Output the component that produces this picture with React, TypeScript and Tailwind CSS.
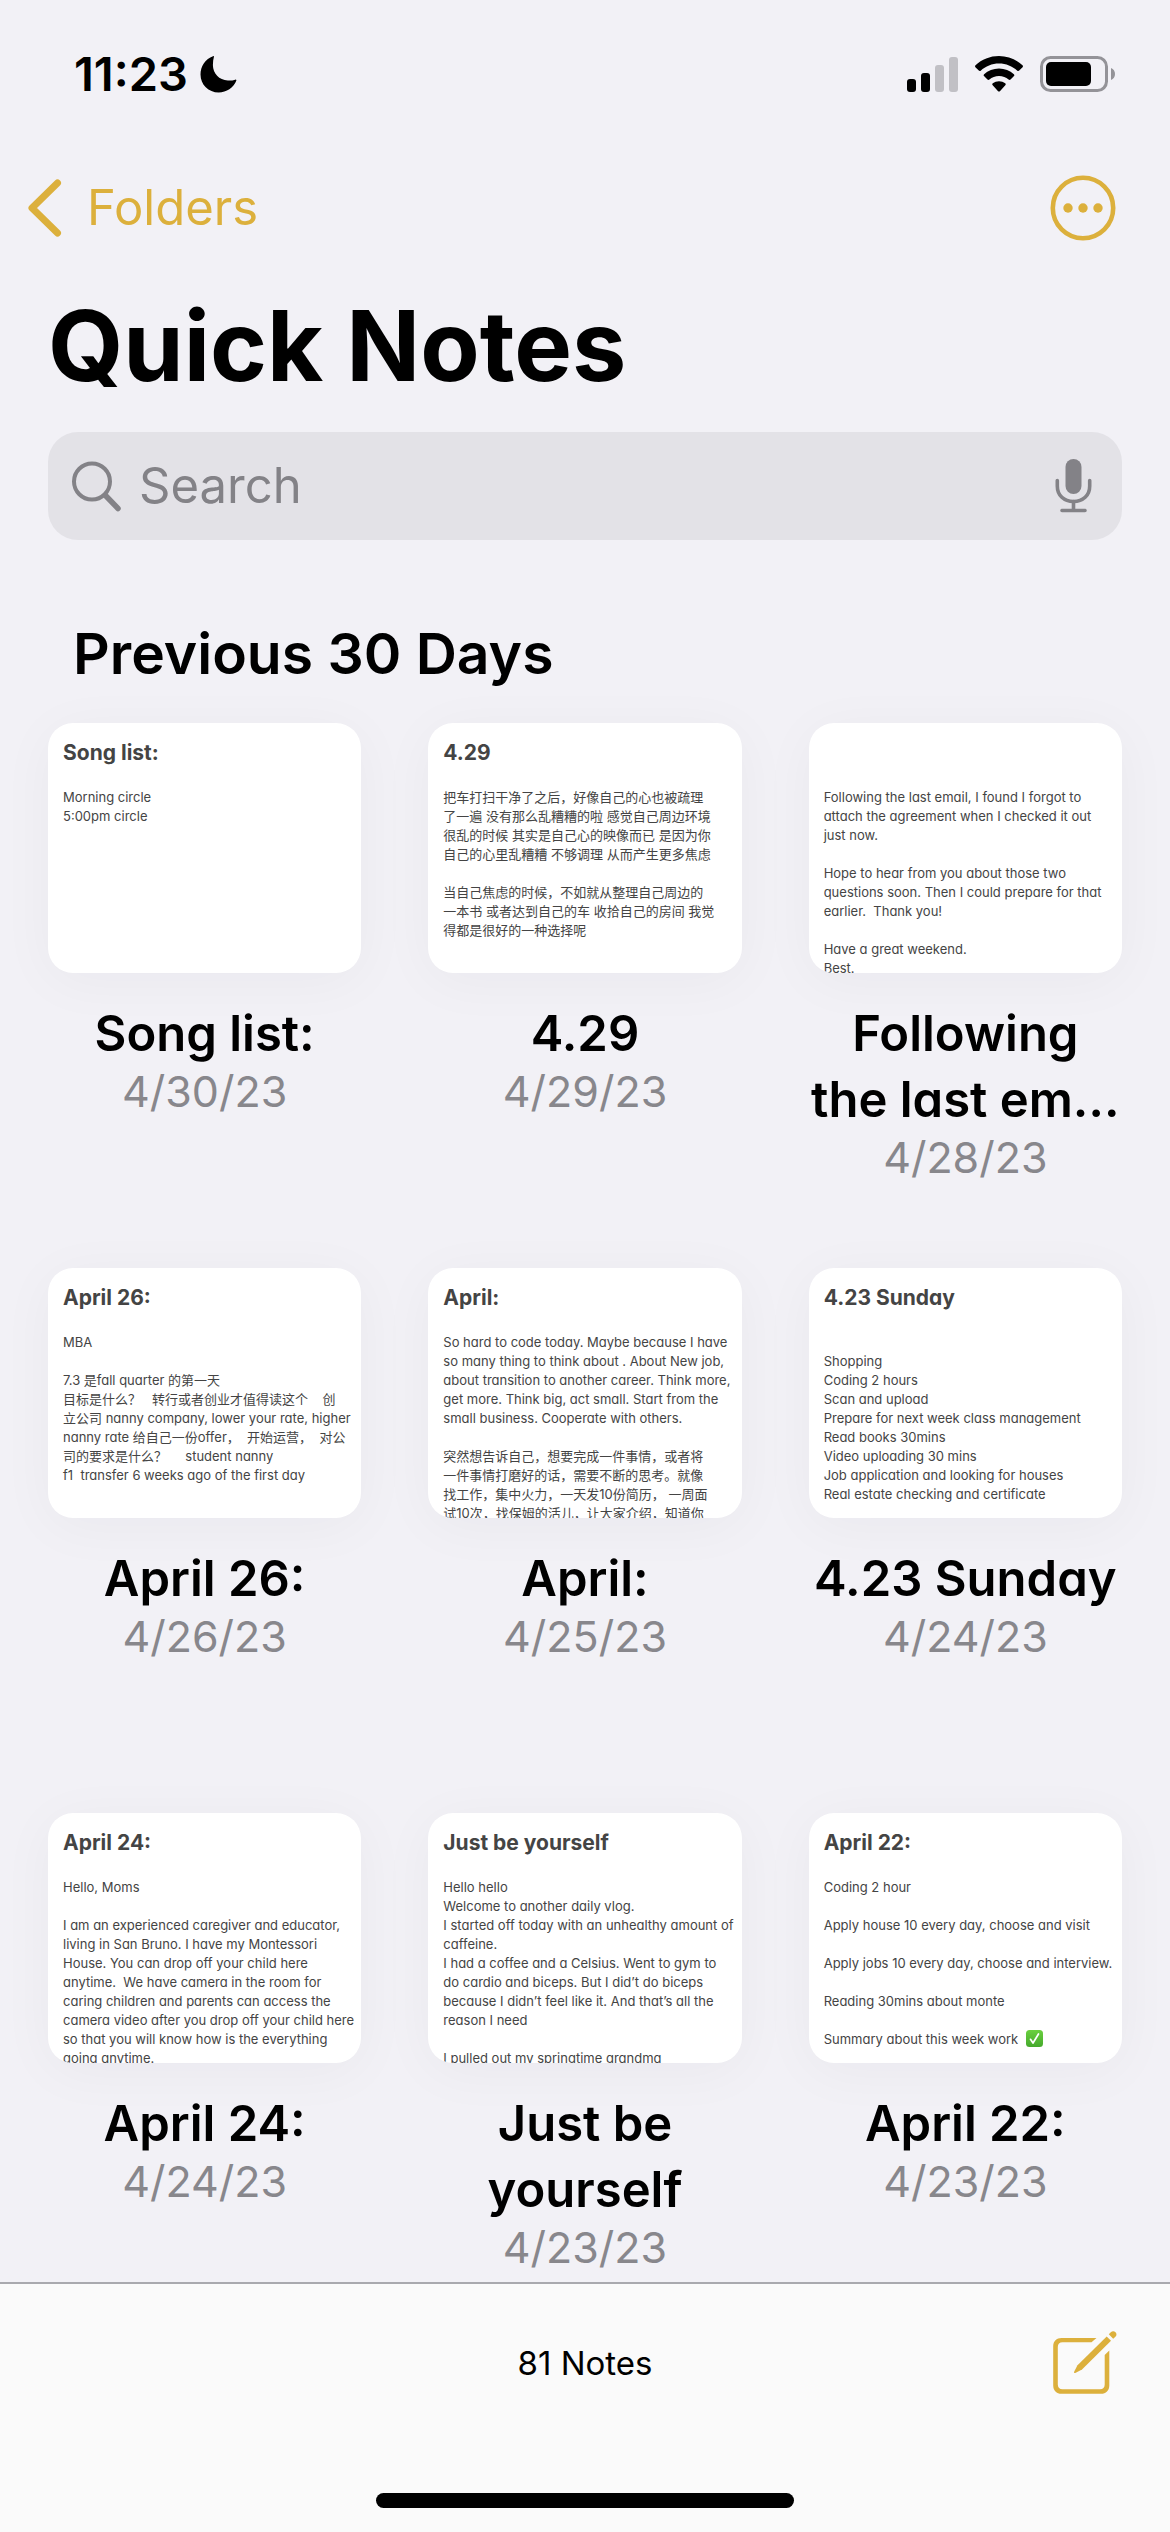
import React from "react";

type Note = {
  title: string;
  date: string;
  heading: string;
  body: string;
  done?: boolean;
};

const notes: Note[] = [
  {
    title: "Song list:",
    date: "4/30/23",
    heading: "Song list:",
    body: "Morning circle\n5:00pm circle",
  },
  {
    title: "4.29",
    date: "4/29/23",
    heading: "4.29",
    body: "把车打扫干净了之后，好像自己的心也被疏理\n了一遍 没有那么乱糟糟的啦 感觉自己周边环境\n很乱的时候 其实是自己心的映像而已 是因为你\n自己的心里乱糟糟 不够调理 从而产生更多焦虑\n\n当自己焦虑的时候，不如就从整理自己周边的\n一本书 或者达到自己的车 收拾自己的房间 我觉\n得都是很好的一种选择呢",
  },
  {
    title: "Following the last em…",
    date: "4/28/23",
    heading: "",
    body: "Following the last email, I found I forgot to\nattach the agreement when I checked it out\njust now.\n\nHope to hear from you about those two\nquestions soon. Then I could prepare for that\nearlier.  Thank you!\n\nHave a great weekend.\nBest.",
  },
  {
    title: "April 26:",
    date: "4/26/23",
    heading: "April 26:",
    body: "MBA\n\n7.3 是fall quarter 的第一天\n目标是什么？   转行或者创业才值得读这个    创\n立公司 nanny company, lower your rate, higher\nnanny rate 给自己一份offer，  开始运营，  对公\n司的要求是什么？     student nanny\nf1  transfer 6 weeks ago of the first day",
  },
  {
    title: "April:",
    date: "4/25/23",
    heading: "April:",
    body: "So hard to code today. Maybe because I have\nso many thing to think about . About New job,\nabout transition to another career. Think more,\nget more. Think big, act small. Start from the\nsmall business. Cooperate with others.\n\n突然想告诉自己，想要完成一件事情，或者将\n一件事情打磨好的话，需要不断的思考。就像\n找工作，集中火力，一天发10份简历， 一周面\n试10次，找保姆的活儿，让大家介绍，知道你",
  },
  {
    title: "4.23 Sunday",
    date: "4/24/23",
    heading: "4.23 Sunday",
    body: "\nShopping\nCoding 2 hours\nScan and upload\nPrepare for next week class management\nRead books 30mins\nVideo uploading 30 mins\nJob application and looking for houses\nReal estate checking and certificate",
  },
  {
    title: "April 24:",
    date: "4/24/23",
    heading: "April 24:",
    body: "Hello, Moms\n\nI am an experienced caregiver and educator,\nliving in San Bruno. I have my Montessori\nHouse. You can drop off your child here\nanytime.  We have camera in the room for\ncaring children and parents can access the\ncamera video after you drop off your child here\nso that you will know how is the everything\ngoing anytime.",
  },
  {
    title: "Just be yourself",
    date: "4/23/23",
    heading: "Just be yourself",
    body: "Hello hello\nWelcome to another daily vlog.\nI started off today with an unhealthy amount of\ncaffeine.\nI had a coffee and a Celsius. Went to gym to\ndo cardio and biceps. But I did’t do biceps\nbecause I didn’t feel like it. And that’s all the\nreason I need\n\nI pulled out my springtime grandma",
  },
  {
    title: "April 22:",
    date: "4/23/23",
    heading: "April 22:",
    body: "Coding 2 hour\n\nApply house 10 every day, choose and visit\n\nApply jobs 10 every day, choose and interview.\n\nReading 30mins about monte\n\nSummary about this week work  ",
    done: true,
  },
];

function StatusBar() {
  return (
    <div className="flex h-[148px] items-center justify-between pr-[54px] pl-[74px]">
      <div className="flex items-center gap-3">
        <span className="text-[47px] leading-[48px] font-semibold">11:23</span>
        <svg width="37" height="37" viewBox="0 0 37 37" aria-label="Do not disturb">
          <path d="M14 .6C14 .1 13.500 -.1 13 .2C5.500 3 .5 10.200 .5 18.500C.5 28.700 8.500 36.500 18.700 36.500C26.600 36.500 33.500 31.800 36.300 24.800C36.600 24 36 23.400 35.200 23.700C32.800 24.400 30.300 24.700 27.800 24.500C19.200 24 12.900 17.600 12.900 9C12.900 6 13.300 3.300 14 .6Z" />
        </svg>
      </div>
      <div className="flex items-center gap-[17px]">
        <svg width="51" height="36" viewBox="0 0 51 36" aria-label="Signal">
          <rect x="0" y="23" width="9" height="13" rx="3" />
          <rect x="14" y="17" width="9" height="19" rx="3" />
          <rect x="28" y="9" width="9" height="27" rx="3" fill="#c1c0c5" />
          <rect x="42" y="1" width="9" height="35" rx="3" fill="#c1c0c5" />
        </svg>
        <svg width="48" height="36" viewBox="0 0 48 36" aria-label="Wi-Fi">
          <path d="M24 0C33 0 41.200 3.400 47.500 9.200C48.100 9.800 48.100 10.600 47.600 11.200L44.200 14.600C43.700 15.200 42.900 15.200 42.300 14.700C37.400 10.200 31 7.500 24 7.500C17 7.500 10.600 10.200 5.700 14.700C5.100 15.200 4.300 15.200 3.800 14.600L.4 11.200C-.1 10.600 -.1 9.800 .5 9.200C6.800 3.400 15 0 24 0Z" />
          <path d="M24 12.500C29.700 12.500 34.900 14.600 38.900 18.200C39.500 18.700 39.500 19.500 39 20.100L35.500 23.600C35 24.100 34.200 24.100 33.600 23.600C31 21.400 27.700 20 24 20C20.300 20 17 21.400 14.400 23.600C13.800 24.100 13 24.100 12.500 23.600L9 20.100C8.500 19.500 8.500 18.700 9.100 18.200C13.100 14.600 18.300 12.500 24 12.500Z" />
          <path d="M24 25.200C26.300 25.200 28.500 26 30.200 27.300C30.900 27.800 30.900 28.600 30.300 29.200L24.900 35.200C24.400 35.700 23.600 35.700 23.100 35.200L17.700 29.200C17.100 28.600 17.100 27.800 17.800 27.300C19.500 26 21.700 25.200 24 25.200Z" />
        </svg>
        <svg width="76" height="36" viewBox="0 0 76 36" aria-label="Battery">
          <rect x="1.500" y="1.500" width="65" height="33" rx="9" fill="none" stroke="#949398" strokeWidth="3" />
          <rect x="6" y="6" width="45" height="24" rx="5" />
          <path d="M71 12C73.500 13 75 15.300 75 18C75 20.700 73.500 23 71 24Z" fill="#949398" />
        </svg>
      </div>
    </div>
  );
}

function NavBar() {
  return (
    <nav className="flex h-[120px] items-center justify-between pr-[54px] pl-7 text-[#dcb03c]">
      <a href="#folders" className="flex items-center gap-[25px] text-[49px] leading-[60px]">
        <svg width="34" height="58" viewBox="0 0 34 58" fill="none" stroke="currentColor" strokeWidth="7" strokeLinecap="round" strokeLinejoin="round" aria-hidden="true">
          <path d="M29.500 4L4 29L29.500 54" />
        </svg>
        Folders
      </a>
      <button type="button" aria-label="More">
        <svg width="66" height="66" viewBox="0 0 66 66" fill="none" aria-hidden="true">
          <circle cx="33" cy="33" r="30.200" stroke="currentColor" strokeWidth="4.600" />
          <circle cx="18" cy="33" r="4.700" fill="currentColor" />
          <circle cx="33" cy="33" r="4.700" fill="currentColor" />
          <circle cx="48" cy="33" r="4.700" fill="currentColor" />
        </svg>
      </button>
    </nav>
  );
}

function SearchField() {
  return (
    <div className="flex h-[108px] items-center rounded-[30px] bg-[#e3e2e7] pr-[30px] pl-6 text-[#838287]">
      <svg width="49" height="51" viewBox="0 0 49 51" fill="none" stroke="currentColor" strokeLinecap="round" aria-hidden="true">
        <circle cx="20" cy="20.500" r="18" strokeWidth="4" />
        <path d="M33.500 34.500L46 47.500" strokeWidth="5.500" />
      </svg>
      <input
        type="search"
        aria-label="Search"
        placeholder="Search"
        className="ml-[18px] min-w-0 flex-1 bg-transparent text-[49px] leading-[60px] text-black outline-none placeholder:text-[#838287] placeholder:opacity-100"
      />
      <button type="button" aria-label="Dictate">
        <svg width="37" height="54" viewBox="0 0 37 54" fill="none" stroke="currentColor" strokeWidth="3.600" strokeLinecap="round" aria-hidden="true">
          <rect x="10.500" y="0" width="16" height="35" rx="8" fill="currentColor" stroke="none" />
          <path d="M2.300 21.500V27C2.300 36.500 9 42.500 18.500 42.500C28 42.500 34.700 36.500 34.700 27V21.500" />
          <path d="M18.500 42.500V51.500M7 51.500H30" />
        </svg>
      </button>
    </div>
  );
}

function CheckMark() {
  return (
    <svg className="inline-block align-[-3px]" width="17" height="17" viewBox="0 0 17 17" role="img" aria-label="Done">
      <defs>
        <linearGradient id="tick" x1="0" y1="0" x2="0" y2="1">
          <stop offset="0" stopColor="#6ad03f" />
          <stop offset="1" stopColor="#45a92c" />
        </linearGradient>
      </defs>
      <rect width="17" height="17" rx="3.500" fill="url(#tick)" />
      <path d="M4.500 9.300L7 13L12.500 4" fill="none" stroke="#fff" strokeWidth="1.700" strokeLinecap="round" strokeLinejoin="round" />
    </svg>
  );
}

function NoteTile({ note }: { note: Note }) {
  return (
    <li className="min-w-0">
      <button type="button" className="flex w-full flex-col [font-feature-settings:'cv11']">
        <span className="block h-[250px] w-full overflow-hidden rounded-[25px] bg-white px-[15px] pt-[17px] text-left text-[#444] shadow-[0_8px_56px_rgba(30,20,50,0.04)]">
          <span className="block h-[26px] text-[21px] leading-[26px] font-bold">{note.heading}</span>
          <span className="mt-[22px] block text-[13px] leading-[19px] whitespace-pre">
            {note.body}
            {note.done && <CheckMark />}
          </span>
        </span>
        <span className="mt-7 block w-full text-center text-[49px] leading-[66px] font-semibold">{note.title}</span>
        <span className="block w-full text-center text-[43px] leading-[48px] text-[#88878c]">{note.date}</span>
      </button>
    </li>
  );
}

function Toolbar() {
  return (
    <footer className="sticky bottom-0 mt-auto flex h-[250px] flex-col border-t-2 border-[#a9a9ae] bg-[#fafafa]">
      <div className="grid h-[158px] grid-cols-[1fr_auto_1fr] items-center px-[53px]">
        <span />
        <p className="text-[33px] leading-10">81 Notes</p>
        <button type="button" aria-label="New note" className="justify-self-end text-[#dcb03c]">
          <svg width="64" height="64" viewBox="0 0 64 64" fill="none" aria-hidden="true">
            <path d="M43.500 7L38.500 11.300H9.500C6.500 11.300 4.800 13 4.800 16V53.500C4.800 56.500 6.500 58.300 9.500 58.300H47C50 58.300 51.700 56.500 51.700 53.500V24L56.300 19.500V54.500C56.300 59.500 53 62.800 48 62.800H8.500C3.500 62.800 .2 59.500 .2 54.500V15.200C.2 10.200 3.500 7 8.500 7Z" fill="currentColor" />
            <path d="M53.700 5.500L58 9.700L29 38.500L22.300 41.900C21.500 42.300 20.700 41.500 21.100 40.700L24.500 34.300Z" fill="currentColor" />
            <path d="M55.800 3.300L57.800 1.300C59.200 -.1 61.200 0 62.500 1.200C63.800 2.500 63.800 4.400 62.400 5.800L60.200 7.800Z" fill="currentColor" />
          </svg>
        </button>
      </div>
      <div className="mx-auto mt-auto mb-6 h-[15px] w-[418px] rounded-full bg-black" />
    </footer>
  );
}

export default function App() {
  return (
    <div className="flex min-h-screen flex-col bg-[#f2f1f6] font-['Inter','Noto_Sans_CJK_SC',sans-serif] text-black">
      <StatusBar />
      <NavBar />
      <main className="px-12">
        <h1 className="pt-[18px] text-[97px] leading-[120px] font-bold">Quick Notes</h1>
        <div className="pt-[26px]">
          <SearchField />
        </div>
        <section>
          <h2 className="mt-[78px] px-[25px] text-[57px] leading-[72px] font-semibold">Previous 30 Days</h2>
          <ul className="mt-[33px] grid auto-rows-fr grid-cols-3 gap-x-[67px] gap-y-[87px]">
            {notes.map((note, i) => (
              <NoteTile key={i} note={note} />
            ))}
          </ul>
        </section>
      </main>
      <Toolbar />
    </div>
  );
}
